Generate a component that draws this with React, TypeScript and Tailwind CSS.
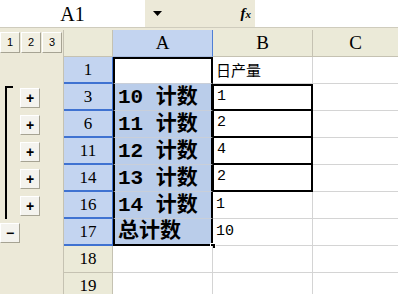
import React from "react";

type Row = {
  n: number;
  a?: string;
  b?: string;
  box?: boolean;
  btn?: "+" | "-";
  sel?: boolean;
};

const rows: Row[] = [
  { n: 1, a: "", b: "日产量", sel: true },
  { n: 3, a: "10 计数", b: "1", box: true, btn: "+", sel: true },
  { n: 6, a: "11 计数", b: "2", box: true, btn: "+", sel: true },
  { n: 11, a: "12 计数", b: "4", box: true, btn: "+", sel: true },
  { n: 14, a: "13 计数", b: "2", box: true, btn: "+", sel: true },
  { n: 16, a: "14 计数", b: "1", btn: "+", sel: true },
  { n: 17, a: "总计数", b: "10", btn: "-", sel: true },
  { n: 18 },
  { n: 19 },
];

const serif = "font-['Liberation_Serif','Noto_Sans_CJK_SC',serif]";
const mono = "font-['Liberation_Mono','Noto_Sans_CJK_SC',monospace]";

function LevelBtn({ label }: { label: string }) {
  return (
    <div className="flex h-[21px] w-[20px] items-center justify-center border border-t-white border-l-white border-r-[#a6a393] border-b-[#a6a393] bg-[#f1efe2] text-[11px] font-['Liberation_Sans',sans-serif] text-black">
      {label}
    </div>
  );
}

function OutlineBtn({ sign }: { sign: "+" | "-" }) {
  return (
    <div className="flex h-[20px] w-[20px] items-center justify-center border border-t-white border-l-white border-r-[#a6a393] border-b-[#a6a393] bg-[#f4f3ee] text-[14px] leading-none font-bold font-['Liberation_Sans',sans-serif] text-black">
      {sign === "+" ? "+" : "−"}
    </div>
  );
}

export default function App() {
  return (
    <div className="h-[294px] w-[398px] overflow-hidden bg-[#ece9d8] select-none">
      {/* formula bar */}
      <div className="flex h-[28px] items-stretch border-b border-[#cfccbd]">
        <div className={`flex w-[145px] items-center justify-center bg-white text-[20px] text-black ${serif}`}>
          A1
        </div>
        <div className="flex w-[25px] items-center justify-center">
          <svg width="9" height="5" viewBox="0 0 9 5">
            <polygon points="0,0 9,0 4.5,5" fill="#000" />
          </svg>
        </div>
        <div className="flex w-[85px] items-center justify-end pr-[4px]">
          <span className="font-['Liberation_Serif',serif] text-[15px] font-bold italic text-black">
            f<span className="text-[11px]">x</span>
          </span>
        </div>
        <div className="flex-1 bg-white" />
      </div>
      <div className="h-[2px]" />

      {/* column headers */}
      <div className="flex h-[27px]">
        <div className="flex w-[64px] items-start gap-[1px] border-r border-[#c5c2b2] pt-[2px]">
          <LevelBtn label="1" />
          <LevelBtn label="2" />
          <LevelBtn label="3" />
        </div>
        <div className="w-[49px] border-b border-r border-[#c5c2b2] bg-[#ebead8]" />
        <div className={`flex w-[100px] items-center justify-center border-b border-r border-b-[#a9bde0] border-r-[#4f7fd6] bg-[#c3d4f0] text-[19px] text-black ${serif}`}>
          A
        </div>
        <div className={`flex w-[100px] items-center justify-center border-b border-r border-[#c5c2b2] bg-[#ebead8] text-[19px] text-black ${serif}`}>
          B
        </div>
        <div className={`flex flex-1 items-center justify-center border-b border-[#c5c2b2] bg-[#ebead8] text-[19px] text-black ${serif}`}>
          C
        </div>
      </div>

      {/* rows */}
      {rows.map((r, i) => {
        const first = i === 0;
        const last = r.n === 17;
        const inBracket = r.n >= 3 && r.n <= 16;
        return (
          <div key={r.n} className="flex h-[27px]">
            {/* outline */}
            <div className="flex w-[64px] items-center border-r border-[#c5c2b2]">
              {r.btn === "-" ? (
                <OutlineBtn sign="-" />
              ) : (
                <>
                  <div
                    className={`ml-[5px] w-[15px] self-stretch ${
                      inBracket ? "border-l-2 border-black" : ""
                    } ${r.n === 3 ? "mt-[2px]" : ""}`}
                  >
                    {r.n === 3 && <div className="w-[6px] border-t-2 border-black" />}
                  </div>
                  {r.btn && <OutlineBtn sign="+" />}
                </>
              )}
            </div>
            {/* row header */}
            <div
              className={`flex w-[49px] items-center justify-center text-[17px] text-black ${serif} ${
                r.sel
                  ? "border-b-2 border-r border-b-[#3f72d1] border-r-[#3f72d1] bg-[#c3d4f0]"
                  : "border-b border-r border-[#c5c2b2] bg-[#ebead8]"
              }`}
            >
              {r.n}
            </div>
            {/* column A */}
            <div
              className={`relative flex w-[100px] items-center pl-[3px] ${
                r.sel
                  ? `border-x-2 border-black ${first ? "border-t-2 bg-white" : "bg-[#bacdea]"} ${
                      last ? "border-b-2" : "border-b border-b-[#c9cfd9]"
                    }`
                  : "border-b border-r border-[#d4d4d4] bg-white"
              }`}
            >
              {r.a && (
                <span className={`whitespace-pre text-[21px] leading-none font-bold text-black ${mono}`}>
                  {r.a}
                </span>
              )}
              {last && (
                <div className="absolute -right-[5px] -bottom-[5px] h-[6px] w-[6px] border border-white bg-black" />
              )}
            </div>
            {/* column B */}
            <div
              className={`flex w-[100px] items-center bg-white pl-[3px] ${
                r.box
                  ? `border-b-2 border-r-2 border-l border-black ${r.n === 3 ? "border-t-2" : ""}`
                  : "border-b border-r border-[#d4d4d4]"
              }`}
            >
              {r.b && (
                <span
                  className={`text-black ${
                    r.n === 1
                      ? "text-[15px] font-['Noto_Sans_CJK_SC',sans-serif]"
                      : `text-[15px] ${mono}`
                  }`}
                >
                  {r.b}
                </span>
              )}
            </div>
            {/* column C */}
            <div className="flex-1 border-b border-[#d4d4d4] bg-white" />
          </div>
        );
      })}
    </div>
  );
}
